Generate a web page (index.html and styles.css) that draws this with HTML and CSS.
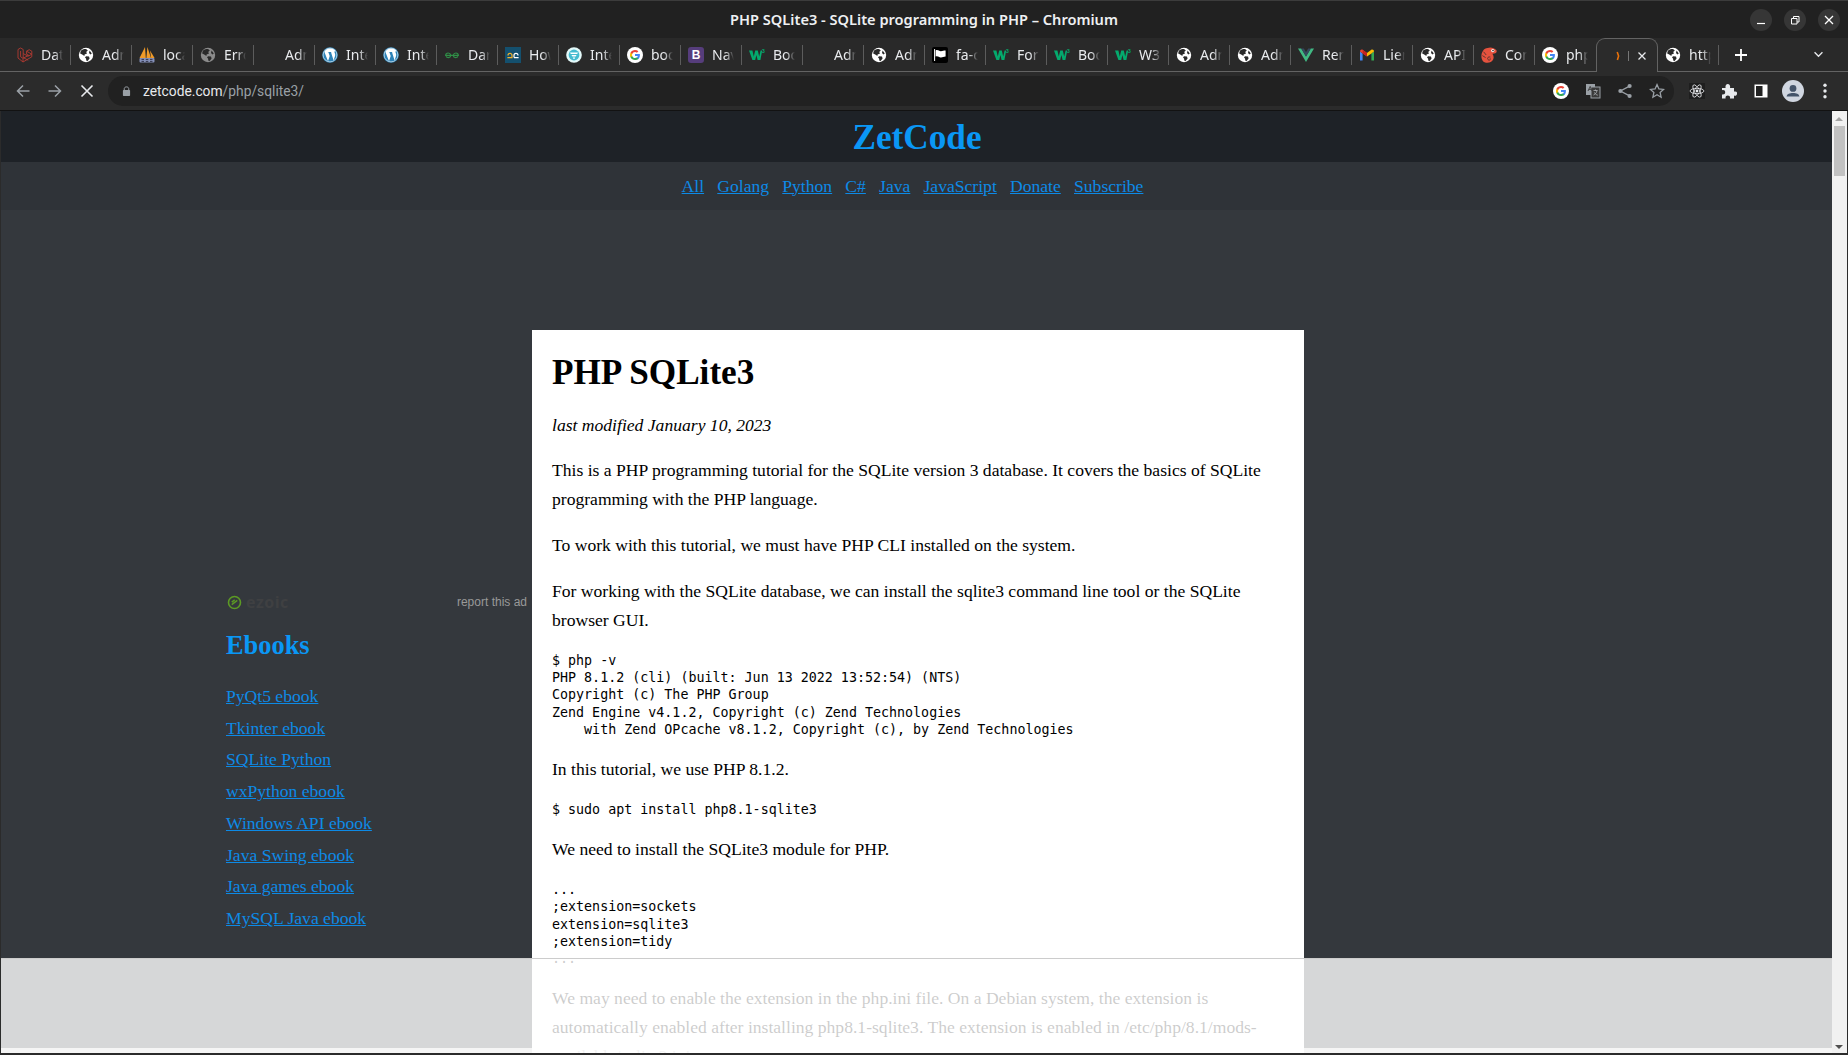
FILE: index.html
```html
<!DOCTYPE html>
<html lang="en">
<head>
  <meta charset="UTF-8">
  <title>PHP SQLite3 - SQLite programming in PHP</title>
  <link rel="stylesheet" href="styles.css">
</head>
<body>

<svg class="defs" width="0" height="0">
  <symbol id="i-globe" viewBox="0 0 16 16">
    <circle cx="8" cy="8" r="7.2" fill="currentColor"/>
    <path d="M3.2 3.6C4.6 2.2 6.6 1.8 8.4 2.2L9.8 3.6 8.2 5 9 6.4 6.6 7.4 6.4 9 4.2 7.4 2.2 6.6C2.3 5.4 2.6 4.4 3.2 3.6ZM8 9.2L11 9.6 11.6 11.4 9.6 14 8.4 13.8 8 11.6 7 10.4ZM11.6 3.6L13.8 6.4 12.4 7.4 11 6Z" fill="#2a2a2a"/>
  </symbol>
  <symbol id="i-laravel" viewBox="0 0 16 16">
    <path d="M1 2.5L3.6 1 6.2 2.5V10.6L11.2 13.2M1 2.5V11L6 15 14.8 9.8V7.2L11.2 9.2 6.2 6.6M3.6 4V9.8L6 11.3M6 15V11.3L11.2 8.6M9.6 4.2L12.2 2.7 14.8 4.2V7.2L12.2 5.7 9.6 4.2V7.2L12.2 8.7" fill="none" stroke="#b23a32" stroke-width="0.9"/>
  </symbol>
  <symbol id="i-pma" viewBox="0 0 16 16">
    <path d="M0.5 11L6 0 6.8 11ZM7.4 11L8.4 0 12 11ZM12.2 11L11 3.6 15.6 11Z" fill="#ef9a28"/>
    <rect x="0.5" y="11" width="15" height="4.6" rx="1" fill="#8490b8"/>
    <path d="M2.5 12.4H5M6.8 12.4H9.3M11 12.4H13.5M2.5 14.4H5M6.8 14.4H9.3M11 14.4H13.5" stroke="#2a2a3c" stroke-width="0.9"/>
  </symbol>
  <symbol id="i-wp" viewBox="0 0 16 16">
    <circle cx="8" cy="8" r="7.8" fill="#2d83b8"/>
    <circle cx="8" cy="8" r="6.9" fill="none" stroke="#fff" stroke-width="0.6"/>
    <path d="M2.6 5.4L6 14.2 7.7 9 6.4 5.2 5.5 5H9.8L9 5.2 11.6 13.6 13.1 8.8C13.6 7 12.6 6.2 12.5 5.2 12.4 4.4 13 4 13.4 4 12.2 2.4 10.2 1.6 8 1.6 5.6 1.6 3.6 2.8 2.6 4.6Z" fill="#fff"/>
  </symbol>
  <symbol id="i-gfg" viewBox="0 0 16 16">
    <path d="M8 8.4H1.6C1.8 6.6 3 6 4.2 6 5.6 6 6.4 6.8 7 8.4 6.6 10 5.6 10.6 4.4 10.6 3.2 10.6 2.4 10 2 9.4M8 8.4H14.4C14.2 6.6 13 6 11.8 6 10.4 6 9.6 6.8 9 8.4 9.4 10 10.4 10.6 11.6 10.6 12.8 10.6 13.6 10 14 9.4" fill="none" stroke="#2f8d46" stroke-width="1.1"/>
  </symbol>
  <symbol id="i-hov" viewBox="0 0 16 16">
    <rect width="16" height="16" fill="#14506e"/>
    <path d="M3 8.4C3 5.8 7 5.8 7 8.4V10.6H2.4" fill="none" stroke="#f5b32a" stroke-width="1.2"/>
    <path d="M9 10.6H13.6M9 10.6V8.4C9 5.8 13 5.8 13 8.4" fill="none" stroke="#fff" stroke-width="1.2"/>
  </symbol>
  <symbol id="i-int" viewBox="0 0 16 16">
    <circle cx="8" cy="8" r="7.8" fill="#e4fafa"/>
    <circle cx="8" cy="8" r="5.4" fill="#45bcd0"/>
    <path d="M4 5.4H12L11.2 7H4.8ZM5.4 8H10.6L9.6 9.6H6.4ZM6.8 10.4H9.2L8.4 12H7.6Z" fill="#fff"/>
  </symbol>
  <symbol id="i-google" viewBox="0 0 16 16">
    <circle cx="8" cy="8" r="8" fill="#fff"/>
    <path d="M12.9 8.2C12.9 7.8 12.9 7.4 12.8 7H8V9H10.8C10.7 9.7 10.3 10.2 9.8 10.6V11.9H11.4C12.4 11 12.9 9.7 12.9 8.2Z" fill="#4285f4"/>
    <path d="M8 13C9.4 13 10.5 12.5 11.4 11.9L9.8 10.6C9.3 10.9 8.7 11.1 8 11.1 6.7 11.1 5.6 10.2 5.2 9H3.5V10.3C4.4 12 6.1 13 8 13Z" fill="#34a853"/>
    <path d="M5.2 9C5 8.4 5 7.6 5.2 7V5.7H3.5C2.8 7.1 2.8 8.9 3.5 10.3Z" fill="#fbbc05"/>
    <path d="M8 4.9C8.7 4.9 9.4 5.2 9.9 5.7L11.4 4.2C10.5 3.4 9.3 3 8 3 6.1 3 4.4 4 3.5 5.7L5.2 7C5.6 5.8 6.7 4.9 8 4.9Z" fill="#ea4335"/>
  </symbol>
  <symbol id="i-boot" viewBox="0 0 16 16">
    <rect width="16" height="16" rx="3" fill="#563d7c"/>
    <text x="8" y="12.4" text-anchor="middle" class="boot-b">B</text>
  </symbol>
  <symbol id="i-w3" viewBox="0 0 16 16">
    <path d="M0 3.6H3.4L4.8 9.4 6.2 3.6H8.8L10.2 9.4 11.6 3.6H13.2L11.4 13H8.6L7.4 8 6.2 13H3.4Z" fill="#04aa6d"/>
    <text x="13" y="6" class="w3-n">3</text>
  </symbol>
  <symbol id="i-flag" viewBox="0 0 16 16">
    <rect width="16" height="16" rx="2" fill="#000"/>
    <path d="M2.6 2V14" stroke="#fff" stroke-width="1"/>
    <path d="M3.6 3.4C6 2.2 7 4.4 9 4.2 10.6 4 11.6 3.4 13.6 3.4V9.6C11.6 9.6 10.6 10.4 9 10.4 7 10.6 6 8.6 3.6 9.6Z" fill="#fff"/>
  </symbol>
  <symbol id="i-vue" viewBox="0 0 16 16">
    <path d="M0 1.4H3.2L8 9.6 12.8 1.4H16L8 15Z" fill="#41b883"/>
    <path d="M3.2 1.4H5.8L8 5.2 10.2 1.4H12.8L8 9.6Z" fill="#35495e"/>
  </symbol>
  <symbol id="i-gmail" viewBox="0 0 16 16">
    <path d="M1 13.6V4.6L3.6 6.6V13.6Z" fill="#4285f4"/>
    <path d="M12.4 13.6V6.6L15 4.6V13.6Z" fill="#34a853"/>
    <path d="M1 4.6C1 2.8 2.6 2 4 3L8 6 8 9.4 1 4.6Z" fill="#ea4335"/>
    <path d="M15 4.6C15 2.8 13.4 2 12 3L8 6 8 9.4 12.4 6.6Z" fill="#fbbc05"/>
    <path d="M3.6 6.6L8 9.4 8 6 3.6 2.8Z" fill="#c5221f"/>
  </symbol>
  <symbol id="i-cham" viewBox="0 0 16 16">
    <path d="M0.4 9.6C0.4 5 2.8 1.2 6.6 1 8.8 0 12.8 0.2 15.4 3.2 16.2 4.6 15.4 6.6 13.4 6.6L11.4 6.8C12.8 8.6 13 11 12 12.8 10.6 16 4.8 16.6 2.2 14.4 1 13 0.4 11.4 0.4 9.6Z" fill="#e5523e"/>
    <circle cx="11.8" cy="3.6" r="1.6" fill="#fff"/>
    <circle cx="12" cy="3.6" r="0.8" fill="#2a2a2a"/>
    <path d="M2.6 4.8L5.2 8M1.4 8.6L4.6 10.6M9.4 10C7 9.4 6 11 7 12.6 8 13.8 10 12.8 9.2 11.4" fill="none" stroke="#2a2a2a" stroke-width="0.7"/>
  </symbol>
</svg>

<div class="window">
  <header class="titlebar">
    <span></span>
    <div class="win-title">PHP SQLite3 - SQLite programming in PHP – Chromium</div>
    <div class="win-controls">
      <button class="win-btn"><svg viewBox="0 0 12 12"><path d="M2 9.5H10" stroke="#fff" stroke-width="1.2"/></svg></button>
      <button class="win-btn"><svg viewBox="0 0 12 12"><path d="M2.5 4.5H8V10H2.5ZM4.5 4.5V2.5H10V8H8" fill="none" stroke="#fff" stroke-width="1"/></svg></button>
      <button class="win-btn"><svg viewBox="0 0 12 12"><path d="M2 2L10 10M10 2L2 10" stroke="#fff" stroke-width="1.3"/></svg></button>
    </div>
  </header>

  <nav class="tabstrip">
    <div class="tab"><svg class="fav"><use href="#i-laravel"/></svg><span class="tab-label">Database</span></div>
    <div class="tab"><svg class="fav"><use href="#i-globe"/></svg><span class="tab-label">Admin</span></div>
    <div class="tab"><svg class="fav"><use href="#i-pma"/></svg><span class="tab-label">localhost</span></div>
    <div class="tab"><svg class="fav dim"><use href="#i-globe"/></svg><span class="tab-label">Error</span></div>
    <div class="tab"><span class="fav"></span><span class="tab-label">Admin</span></div>
    <div class="tab"><svg class="fav"><use href="#i-wp"/></svg><span class="tab-label">Integrate</span></div>
    <div class="tab"><svg class="fav"><use href="#i-wp"/></svg><span class="tab-label">Integrate</span></div>
    <div class="tab"><svg class="fav"><use href="#i-gfg"/></svg><span class="tab-label">Dart</span></div>
    <div class="tab"><svg class="fav"><use href="#i-hov"/></svg><span class="tab-label">How</span></div>
    <div class="tab"><svg class="fav"><use href="#i-int"/></svg><span class="tab-label">Integrate</span></div>
    <div class="tab"><svg class="fav"><use href="#i-google"/></svg><span class="tab-label">boots</span></div>
    <div class="tab"><svg class="fav"><use href="#i-boot"/></svg><span class="tab-label">Navbar</span></div>
    <div class="tab"><svg class="fav"><use href="#i-w3"/></svg><span class="tab-label">Boots</span></div>
    <div class="tab"><span class="fav"></span><span class="tab-label">Admin</span></div>
    <div class="tab"><svg class="fav"><use href="#i-globe"/></svg><span class="tab-label">Admin</span></div>
    <div class="tab"><svg class="fav"><use href="#i-flag"/></svg><span class="tab-label">fa-check</span></div>
    <div class="tab"><svg class="fav"><use href="#i-w3"/></svg><span class="tab-label">Form</span></div>
    <div class="tab"><svg class="fav"><use href="#i-w3"/></svg><span class="tab-label">Boots</span></div>
    <div class="tab"><svg class="fav"><use href="#i-w3"/></svg><span class="tab-label">W3.CSS</span></div>
    <div class="tab"><svg class="fav"><use href="#i-globe"/></svg><span class="tab-label">Admin</span></div>
    <div class="tab"><svg class="fav"><use href="#i-globe"/></svg><span class="tab-label">Admin</span></div>
    <div class="tab"><svg class="fav"><use href="#i-vue"/></svg><span class="tab-label">Render</span></div>
    <div class="tab"><svg class="fav"><use href="#i-gmail"/></svg><span class="tab-label">Lien</span></div>
    <div class="tab"><svg class="fav"><use href="#i-globe"/></svg><span class="tab-label">API</span></div>
    <div class="tab"><svg class="fav"><use href="#i-cham"/></svg><span class="tab-label">Configure</span></div>
    <div class="tab tab-last"><svg class="fav"><use href="#i-google"/></svg><span class="tab-label">php</span></div>
    <div class="tab-active">
      <svg class="spinner" viewBox="0 0 4 10"><path d="M1.2 1L2.6 5 1.4 9" fill="none" stroke="#e8710a" stroke-width="1.6"/></svg>
      <span class="tab-bar"></span>
      <svg class="tab-x" viewBox="0 0 10 10"><path d="M1.5 1.5L8.5 8.5M8.5 1.5L1.5 8.5" stroke="#e8eaed" stroke-width="1.3"/></svg>
    </div>
    <div class="tab"><svg class="fav"><use href="#i-globe"/></svg><span class="tab-label">https</span></div>
    <svg class="tab-plus" viewBox="0 0 14 14"><path d="M7 1V13M1 7H13" stroke="#fff" stroke-width="1.8"/></svg>
    <svg class="tab-more" viewBox="0 0 12 8"><path d="M1.5 1.5L6 6 10.5 1.5" fill="none" stroke="#e8eaed" stroke-width="1.5"/></svg>
  </nav>

  <div class="toolbar">
    <div class="tool dim-tool"><svg viewBox="0 0 16 16"><path d="M14.5 8H2.5M8 2.5L2.5 8 8 13.5" fill="none" stroke="currentColor" stroke-width="1.5"/></svg></div>
    <div class="tool dim-tool"><svg viewBox="0 0 16 16"><path d="M1.5 8H13.5M8 2.5L13.5 8 8 13.5" fill="none" stroke="currentColor" stroke-width="1.5"/></svg></div>
    <div class="tool"><svg viewBox="0 0 16 16"><path d="M2.5 2.5L13.5 13.5M13.5 2.5L2.5 13.5" fill="none" stroke="currentColor" stroke-width="1.6"/></svg></div>
    <div class="omnibox">
      <svg class="lock" viewBox="0 0 10 12"><path d="M2.5 5V3.4C2.5 0.8 7.5 0.8 7.5 3.4V5" fill="none" stroke="#9aa0a6" stroke-width="1.1"/><rect x="1" y="5" width="8" height="6.6" rx="0.8" fill="#9aa0a6"/></svg>
      <div class="url"><span class="url-host">zetcode.com</span>/php/sqlite3/</div>
      <div class="tool"><svg class="g-icon"><use href="#i-google"/></svg></div>
      <div class="tool"><svg viewBox="0 0 16 16"><rect x="1" y="1" width="9" height="11" fill="#9aa0a6"/><rect x="6" y="4" width="9" height="11" fill="#3a3a3a" stroke="#9aa0a6"/><path d="M8.5 7.5H12.5M10.5 6.5V7.5M12 7.5C11.6 10 10 11.5 8.5 12M9.4 9.4C10 11 11.2 11.8 12.8 12.2" fill="none" stroke="#bdc1c6" stroke-width="0.7"/><path d="M3 8L5.2 3.4 7 8M3.8 6.4H6.4" fill="none" stroke="#3a3a3a" stroke-width="0.9"/></svg></div>
      <div class="tool dim-tool"><svg viewBox="0 0 16 16"><path d="M12.6 3.2L3.4 8 12.6 12.8" fill="none" stroke="currentColor" stroke-width="1.3"/><circle cx="12.6" cy="3" r="2.1" fill="currentColor"/><circle cx="3.4" cy="8" r="2.1" fill="currentColor"/><circle cx="12.6" cy="13" r="2.1" fill="currentColor"/></svg></div>
      <div class="tool dim-tool"><svg viewBox="0 0 16 16"><path d="M8 1.6L9.9 5.9 14.6 6.4 11.1 9.5 12.1 14.2 8 11.8 3.9 14.2 4.9 9.5 1.4 6.4 6.1 5.9Z" fill="none" stroke="currentColor" stroke-width="1.3"/></svg></div>
    </div>
    <div class="tool-group">
      <div class="tool"><svg viewBox="0 0 18 18"><rect width="18" height="18" fill="#1e1e1e"/><circle cx="9" cy="9" r="1.6" fill="#e8eaed"/><g fill="none" stroke="#e8eaed" stroke-width="0.9"><ellipse cx="9" cy="9" rx="7.8" ry="3"/><ellipse cx="9" cy="9" rx="7.8" ry="3" transform="rotate(60 9 9)"/><ellipse cx="9" cy="9" rx="7.8" ry="3" transform="rotate(120 9 9)"/></g></svg></div>
      <div class="tool"><svg viewBox="0 0 16 16"><path d="M1 5H4.6C4 2.6 5.2 1 6.8 1 8.4 1 9.6 2.6 9 5H13V8.6C15.4 8 16.6 9.2 16 11 15.8 12.6 14.4 13.2 13 12.6V15.4H9C9.4 13.6 8.4 12.4 6.8 12.4 5.2 12.4 4.2 13.6 4.6 15.4H1V11.4C3 11.8 4.2 10.8 4.2 9.2 4.2 7.6 3 6.6 1 7.2Z" fill="#e8eaed"/></svg></div>
      <div class="tool"><svg viewBox="0 0 16 16"><rect x="1.5" y="1.5" width="13" height="13" fill="#fff"/><rect x="3" y="3" width="6.5" height="10" fill="#222"/></svg></div>
      <div class="tool"><svg class="avatar" viewBox="0 0 22 22"><circle cx="11" cy="11" r="11" fill="#d0d6e0"/><circle cx="11" cy="8.4" r="3.4" fill="#44546a"/><path d="M4.6 16.6C5 13.8 7.6 13 11 13 14.4 13 17 13.8 17.4 16.6Z" fill="#44546a"/></svg></div>
      <div class="tool"><svg viewBox="0 0 16 16"><circle cx="8" cy="2.2" r="1.7" fill="#e8eaed"/><circle cx="8" cy="8" r="1.7" fill="#e8eaed"/><circle cx="8" cy="13.8" r="1.7" fill="#e8eaed"/></svg></div>
    </div>
  </div>

  <div class="viewport">
    <div class="site">
      <div class="site-head">ZetCode</div>
      <div class="site-nav">
        <a href="#">All</a>
        <a href="#">Golang</a>
        <a href="#">Python</a>
        <a href="#">C#</a>
        <a href="#">Java</a>
        <a href="#">JavaScript</a>
        <a href="#">Donate</a>
        <a href="#">Subscribe</a>
      </div>

      <div class="columns">
        <aside class="side">
          <div class="ad-row">
            <div class="ezoic">
              <svg viewBox="0 0 14 14"><circle cx="7" cy="7" r="5.6" fill="none" stroke="#5c9a24" stroke-width="1.5"/><path d="M4.4 9L9.6 5M4.4 6.6L7.2 4.6" fill="none" stroke="#5c9a24" stroke-width="1.3"/></svg>
              <span>ezoic</span>
            </div>
            <span class="report">report this ad</span>
          </div>
          <h2>Ebooks</h2>
          <ul class="ebooks">
            <li><a href="#">PyQt5 ebook</a></li>
            <li><a href="#">Tkinter ebook</a></li>
            <li><a href="#">SQLite Python</a></li>
            <li><a href="#">wxPython ebook</a></li>
            <li><a href="#">Windows API ebook</a></li>
            <li><a href="#">Java Swing ebook</a></li>
            <li><a href="#">Java games ebook</a></li>
            <li><a href="#">MySQL Java ebook</a></li>
          </ul>
        </aside>

        <main class="article">
          <h1>PHP SQLite3</h1>
          <p class="modified">last modified January 10, 2023</p>
          <p>This is a PHP programming tutorial for the SQLite version 3 database. It covers the basics of SQLite programming with the PHP language.</p>
          <p>To work with this tutorial, we must have PHP CLI installed on the system.</p>
          <p>For working with the SQLite database, we can install the sqlite3 command line tool or the SQLite browser GUI.</p>
<pre>$ php -v
PHP 8.1.2 (cli) (built: Jun 13 2022 13:52:54) (NTS)
Copyright (c) The PHP Group
Zend Engine v4.1.2, Copyright (c) Zend Technologies
    with Zend OPcache v8.1.2, Copyright (c), by Zend Technologies</pre>
          <p>In this tutorial, we use PHP 8.1.2.</p>
<pre>$ sudo apt install php8.1-sqlite3</pre>
          <p>We need to install the SQLite3 module for PHP.</p>
<pre>...
;extension=sockets
extension=sqlite3
;extension=tidy
...</pre>
          <p>We may need to enable the extension in the php.ini file. On a Debian system, the extension is automatically enabled after installing php8.1-sqlite3. The extension is enabled in /etc/php/8.1/mods-available/sqlite3.ini.</p>
        </main>
      </div>

      <div class="consent"><div class="consent-edge"></div></div>
    </div>

    <div class="scrollbar">
      <span class="arrow-up"></span>
      <span class="thumb"></span>
      <span class="arrow-down"></span>
    </div>
  </div>
</div>

</body>
</html>
```

FILE: styles.css
```css
* { box-sizing: border-box; }
html, body { margin: 0; padding: 0; height: 100%; overflow: hidden; }
body { background: #2b2b2b; font-family: "Noto Sans", sans-serif; }
.defs { position: absolute; }
.boot-b { font: bold 12px "Liberation Sans", sans-serif; fill: #fff; }
.w3-n { font: bold 5px "Liberation Sans", sans-serif; fill: #04aa6d; }

.window {
  width: 1848px; height: 1055px;
  display: flex; flex-direction: column;
  border-bottom: 2px solid #2b2b2b;
  overflow: hidden;
}

/* title bar */
.titlebar {
  height: 38px; flex: none;
  display: grid; grid-template-columns: 1fr auto 1fr; align-items: center;
  background: #212121; border-top: 1px solid #3c3c3c;
}
.win-title { color: #eef0f2; font-size: 14.6px; font-weight: 600; margin-top: -2px; }
.win-controls { display: flex; justify-content: flex-end; gap: 12px; padding-right: 8px; }
.win-btn {
  width: 22px; height: 22px; padding: 5px; border: 0; border-radius: 50%;
  background: #363636;
}
.win-btn svg { display: block; width: 12px; height: 12px; }

/* tabs */
.tabstrip {
  height: 34px; flex: none;
  display: flex; align-items: center;
  padding-left: 10px;
  background: #292929; border-bottom: 1px solid #636363;
  position: relative;
}
.tab {
  width: 61px; height: 20px; flex: none;
  display: flex; align-items: center; gap: 8px;
  padding-left: 7px;
  border-right: 1px solid #5c5c5c;
}
.tab-last { border-right-color: transparent; }
.fav { width: 16px; height: 16px; flex: none; color: #fff; }
.fav.dim { color: #8b8b8b; }
.tab-label {
  width: 22px; overflow: hidden; white-space: nowrap;
  color: #e8eaed; font-size: 14px;
  -webkit-mask-image: linear-gradient(90deg, #000 60%, transparent);
  mask-image: linear-gradient(90deg, #000 60%, transparent);
}
.tab-active {
  width: 62px; height: 34px; flex: none; align-self: flex-start;
  display: flex; align-items: center; padding: 0 8px 0 19px;
  background: #2b2b2b;
  border: 1px solid #636363; border-bottom: 0;
  border-radius: 9px 9px 0 0;
  margin-bottom: -1px;
  position: relative;
}
.spinner { width: 4px; height: 10px; }
.tab-bar { width: 1px; height: 10px; margin-left: 8px; background: #777; }
.tab-x { width: 10px; height: 10px; margin-left: 8px; }
.tab-plus { width: 14px; height: 14px; margin-left: 15px; flex: none; }
.tab-more { width: 11px; height: 7px; margin-left: 65px; flex: none; }

/* toolbar */
.toolbar {
  height: 39px; flex: none;
  display: flex; align-items: center;
  padding: 0 7px;
  background: #2b2b2b; border-bottom: 1px solid #121212;
}
.tool {
  width: 32px; height: 30px; flex: none;
  display: flex; align-items: center; justify-content: center;
  color: #e8eaed;
}
.tool svg { width: 16px; height: 16px; }
.dim-tool { color: #9aa0a6; }
.tool .g-icon { width: 16px; height: 16px; }
.tool .avatar { width: 22px; height: 22px; }
.omnibox {
  flex: 1; height: 30px; margin-left: 5px;
  display: flex; align-items: center;
  padding: 0 1px 0 14px;
  background: #212121; border-radius: 15px;
}
.lock { width: 9px; height: 12px; flex: none; }
.url { flex: 1; margin-left: 12px; font-family: Roboto, sans-serif; font-size: 13.8px; color: #9aa0a6; }
.url-host { color: #e8eaed; }
.tool-group { display: flex; margin-left: 7px; }

/* page */
.viewport { flex: 1; min-height: 0; display: flex; }
.site {
  flex: 1; min-width: 0; position: relative; overflow: hidden;
  background: #34383d; border-left: 1px solid #2b2b2b;
  font-family: "Liberation Serif", serif; font-size: 17.6px; line-height: 29px;
}
.site a { color: #0d8ae6; }
.site-head {
  height: 51px; display: flex; align-items: center; justify-content: center;
  padding: 2px 0 0 1px;
  background: #1e2227; color: #0a97f5;
  font-size: 35.2px; font-weight: bold;
}
.site-nav {
  height: 48px; display: flex; align-items: center; justify-content: center; gap: 13.2px;
  padding-right: 8px;
  background: #2f3338;
}
.columns {
  display: grid; grid-template-columns: 306px 772px;
  padding: 120px 0 0 225px;
}
.side { padding-top: 262px; }
.ad-row {
  height: 20px; padding-right: 5px;
  display: flex; justify-content: space-between; align-items: center;
}
.ezoic { display: flex; align-items: center; gap: 4px; padding-left: 1px; }
.ezoic svg { width: 15px; height: 15px; }
.ezoic span {
  color: #3f4042; font: bold 16px "Open Sans", sans-serif; letter-spacing: .5px;
}
.report { color: #999; font: 12px "Liberation Sans", sans-serif; }
.side h2 { margin: 17px 0 20px; color: #0a97f5; font-size: 26.4px; line-height: 32px; }
.ebooks { list-style: none; margin: 0; padding: 0; line-height: 31.7px; }

.article { background: #fff; color: #000; padding: 21px 20px 20px; min-height: 900px; }
.article h1 { margin: 0 0 16px; font-size: 35.2px; line-height: 44px; }
.article p { margin: 0 0 17px; }
.article p.modified { font-style: italic; margin-bottom: 16px; }
.article pre {
  margin: 0 0 17px;
  font-family: "DejaVu Sans Mono", monospace; font-size: 13.33px; line-height: 17.2px;
}

/* cookie banner, still sliding in */
.consent {
  position: absolute; left: 0; right: 0; bottom: 0; height: 95px;
  background: rgba(255,255,255,.8);
  border-top: 1px solid #ccc;
  display: flex; align-items: flex-end;
}
.consent-edge { width: 100%; height: 5px; background: rgba(255,255,255,.75); }

/* scrollbar */
.scrollbar {
  width: 16px; flex: none;
  display: flex; flex-direction: column; align-items: center;
  padding: 6px 1px 4px 0;
  background: #f1f1f1; border-right: 1px solid #2b2b2b;
}
.arrow-up { border: 4px solid transparent; border-top: 0; border-bottom: 4px solid #a3a3a3; width: 0; }
.thumb { width: 11px; height: 50px; margin-top: 5px; background: #c1c1c1; }
.arrow-down { border: 4px solid transparent; border-bottom: 0; border-top: 4px solid #505050; width: 0; margin-top: auto; }
```
